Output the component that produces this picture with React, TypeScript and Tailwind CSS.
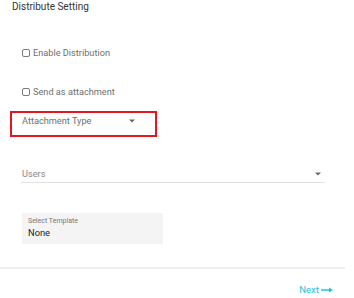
const Caret = ({ className = "" }: { className?: string }) => (
  <svg width="6" height="4" viewBox="0 0 6 4" className={className}>
    <path d="M0 0.5 H6 L3 3.5 Z" fill="#666" />
  </svg>
);

const CheckRow = ({ label, className = "" }: { label: string; className?: string }) => (
  <div className={`flex items-center h-[14px] ml-[22px] ${className}`}>
    <span className="w-[8px] h-[8px] border border-[#7a7a7a] rounded-[2px] mr-[3px] mt-[-1px]" />
    <span className="text-[9.2px] leading-[14px] text-[#6f6f6f]">{label}</span>
  </div>
);

export default function App() {
  return (
    <div className="w-[354px] h-[298px] bg-white flex flex-col font-['Roboto',sans-serif] overflow-hidden">
      {/* Title */}
      <div className="pl-[12px] text-[10px] leading-[14px] text-[#333]">Distribute Setting</div>

      <CheckRow label="Enable Distribution" className="mt-[32px]" />
      <CheckRow label="Send as attachment" className="mt-[25px]" />

      {/* Highlighted dropdown */}
      <div className="ml-[10px] mt-[12px] w-[147px] h-[26px] border-2 border-[#e5161f] flex items-start justify-between pl-[10px] pr-[20px] pt-[1px]">
        <span className="text-[9.2px] leading-[14px] text-[#6f6f6f]">Attachment Type</span>
        <Caret className="mt-[5px]" />
      </div>

      {/* Users */}
      <div className="ml-[21px] mt-[29.5px] w-[304px] border-b border-[#e2e2e2] flex items-start justify-between pl-[1px] pr-[4px] pb-[1.5px]">
        <span className="text-[9.2px] leading-[14px] text-[#8a8a8a]">Users</span>
        <Caret className="mt-[5px]" />
      </div>

      {/* Template */}
      <div className="ml-[22px] mt-[30px] w-[141px] h-[31px] bg-[#f4f4f4] pl-[6px] pt-[3.5px] flex flex-col">
        <span className="text-[7px] leading-[9px] text-[#777]">Select Template</span>
        <span className="mt-[1px] text-[9.3px] leading-[12px] text-[#222]">None</span>
      </div>

      <div className="mt-[23px] w-[345px] h-[2px] bg-[#f0f0f0]" />

      <div className="mt-[14px] flex justify-end pr-[21px]">
        <span className="flex items-center text-[9.6px] leading-[14px] text-[#22c4dc]">
          Next
          <svg width="12" height="6" viewBox="0 0 12 6" className="ml-[2px]">
            <path d="M0 3 H8.5" stroke="#22c4dc" strokeWidth="1.5" />
            <path d="M8 0.5 L12 3 L8 5.5 Z" fill="#22c4dc" />
          </svg>
        </span>
      </div>
    </div>
  );
}
